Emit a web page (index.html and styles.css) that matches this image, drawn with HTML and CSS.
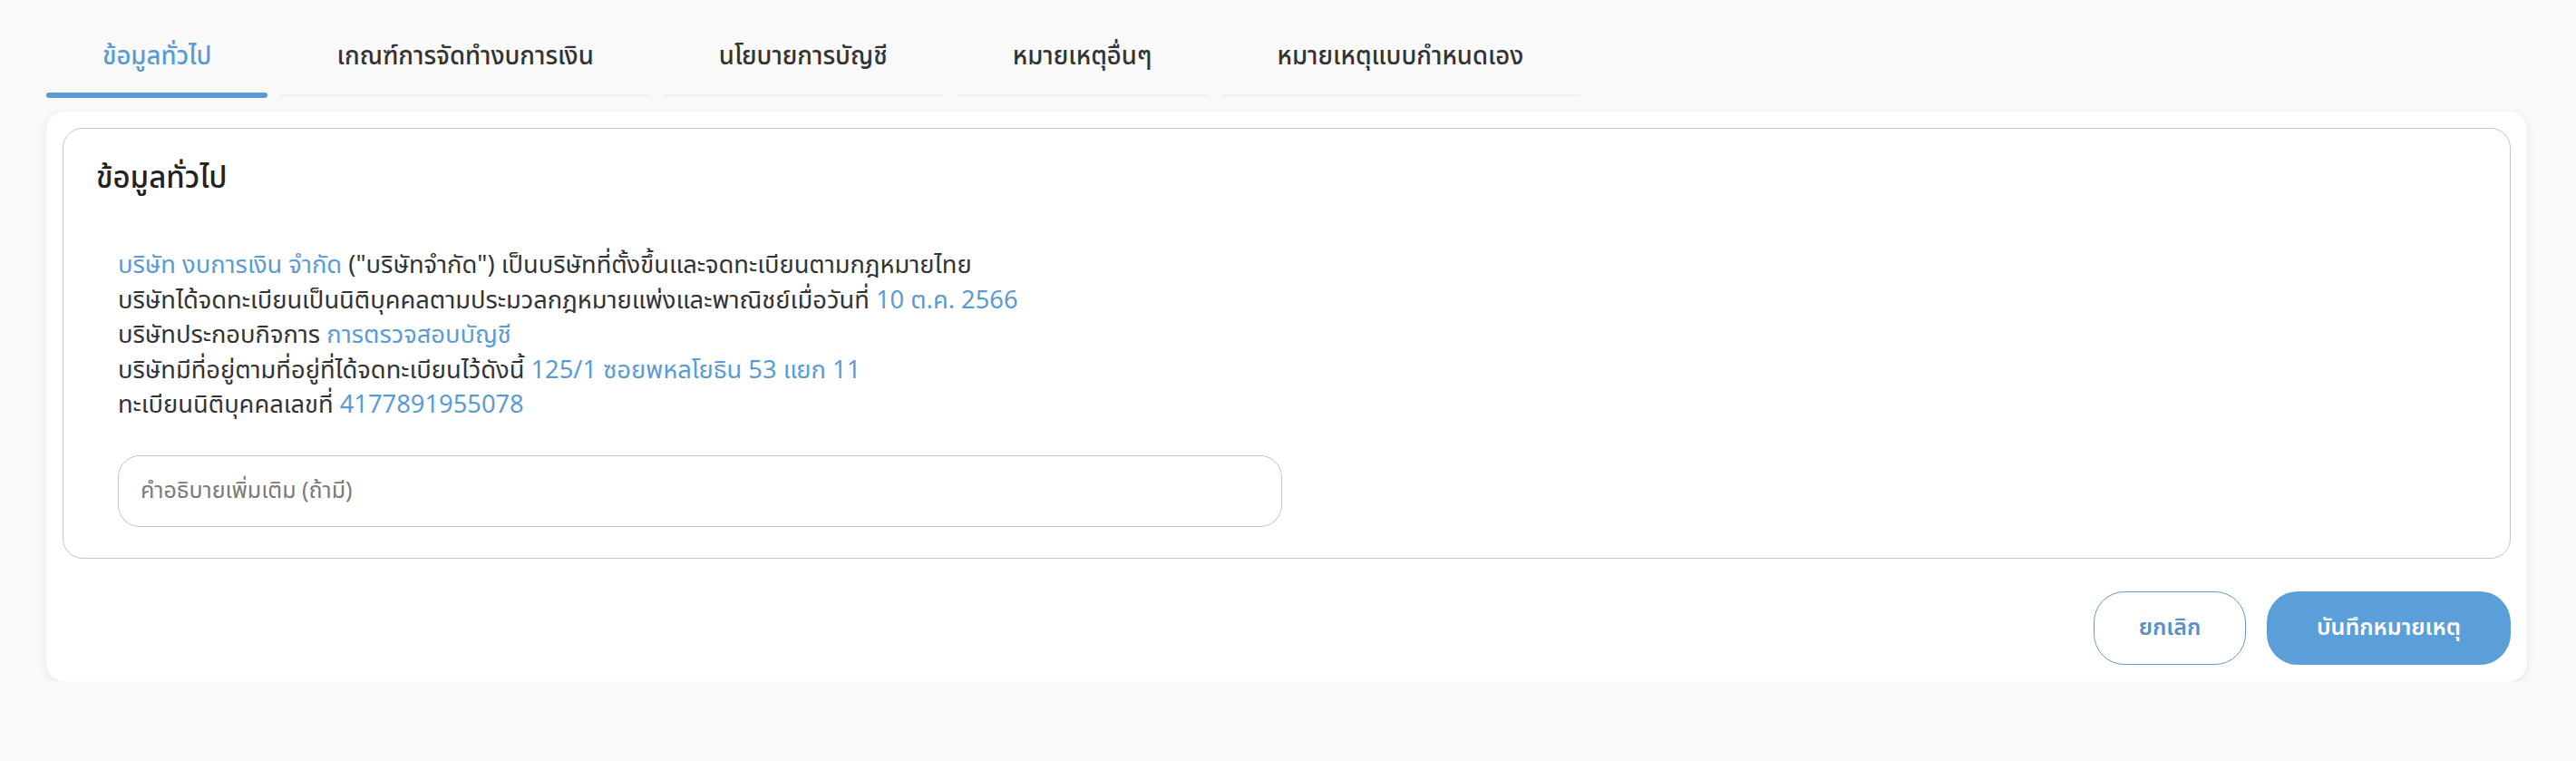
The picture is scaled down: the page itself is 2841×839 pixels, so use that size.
FILE: index.html
```html
<!DOCTYPE html>
<html lang="th">
  <head>
    <meta charset="UTF-8" />
    <meta name="viewport" content="width=device-width, initial-scale=1.0" />
    <title>หมายเหตุประกอบงบการเงิน</title>
    <link rel="stylesheet" href="styles.css">
  </head>
  <body>
    <div class="pageWrapp">
      <div class="tabs">
        <div class="tab active">ข้อมูลทั่วไป</div>
        <div class="tab">เกณฑ์การจัดทำงบการเงิน</div>
        <div class="tab">นโยบายการบัญชี</div>
        <div class="tab">หมายเหตุอื่นๆ</div>
        <div class="tab">หมายเหตุแบบกำหนดเอง</div>
      </div>

      <div class="card">
        <div class="info-box">
          <h2 class="info-title">ข้อมูลทั่วไป</h2>
          <div class="info-text">
            <p><span class="hl">บริษัท งบการเงิน จำกัด</span> ("บริษัทจำกัด") เป็นบริษัทที่ตั้งขึ้นและจดทะเบียนตามกฎหมายไทย</p>
            <p>บริษัทได้จดทะเบียนเป็นนิติบุคคลตามประมวลกฎหมายแพ่งและพาณิชย์เมื่อวันที่ <span class="hl">10 ต.ค. 2566</span></p>
            <p>บริษัทประกอบกิจการ <span class="hl">การตรวจสอบบัญชี</span></p>
            <p>บริษัทมีที่อยู่ตามที่อยู่ที่ได้จดทะเบียนไว้ดังนี้ <span class="hl">125/1 ซอยพหลโยธิน 53 แยก 11</span></p>
            <p>ทะเบียนนิติบุคคลเลขที่ <span class="hl">4177891955078</span></p>
          </div>
          <input class="note-input" type="text" placeholder="คำอธิบายเพิ่มเติม (ถ้ามี)" />
        </div>

        <div class="actions">
          <button class="btn btn-cancel">ยกเลิก</button>
          <button class="btn btn-save">บันทึกหมายเหตุ</button>
        </div>
      </div>
    </div>
  </body>
</html>
```

FILE: styles.css
```css
body {
  font-family: "Noto Sans Thai", "Noto Sans", sans-serif;
  background-color: #f9f9f9;
  color: #333333;
  margin: 0;
}

.pageWrapp {
  padding: 22px 54px 0 51px;
}

/* แถบแท็บด้านบน */
.tabs {
  display: flex;
  flex-flow: row nowrap;
  gap: 14px;
}

.tab {
  position: relative;
  padding: 22px 62px;
  line-height: 38px;
  font-size: 27.5px;
  font-weight: 500;
  color: #333333;
  border-bottom: 2px solid #f0f0f0;
  cursor: pointer;
}

.tab.active {
  color: #5b9bd5;
}

.tab.active::after {
  content: "";
  position: absolute;
  left: 0;
  right: 0;
  bottom: -4px;
  height: 6px;
  border-radius: 4px;
  background-color: #5b9bd5;
}

/* การ์ดหลัก */
.card {
  margin-top: 17px;
  background-color: #ffffff;
  border-radius: 20px;
  padding: 18px;
  box-shadow: 0px 2px 8px rgba(0, 0, 0, 0.08);
}

.info-box {
  border: 1px solid #c4c4c4;
  border-radius: 22px;
  padding: 35px 36px 34px 36px;
}

.info-title {
  margin: 0;
  font-size: 33px;
  line-height: 40px;
  font-weight: 500;
  color: #222222;
}

.info-text {
  margin-top: 57px;
  padding-left: 24px;
  font-size: 27.3px;
  line-height: 38.5px;
}

.info-text p {
  margin: 0;
}

.hl {
  color: #5b9bd5;
}

.note-input {
  display: block;
  box-sizing: border-box;
  margin: 35px 0 0 24px;
  width: 1284px;
  height: 79px;
  padding: 0 24px;
  border: 1px solid #c4c4c4;
  border-radius: 24px;
  font-family: inherit;
  font-size: 25px;
  color: #333333;
  outline: none;
}

.note-input::placeholder {
  color: #7a7a7a;
}

/* ปุ่มด้านล่าง */
.actions {
  display: flex;
  justify-content: flex-end;
  gap: 23px;
  margin-top: 36px;
}

.btn {
  height: 81px;
  border-radius: 34px;
  font-family: inherit;
  font-size: 25px;
  font-weight: 600;
  cursor: pointer;
}

.btn-cancel {
  width: 168px;
  background-color: #ffffff;
  border: 1px solid #5b9bd5;
  color: #5b8fcb;
}

.btn-save {
  width: 269px;
  background-color: #5b9fd8;
  border: none;
  color: #ffffff;
}
```
